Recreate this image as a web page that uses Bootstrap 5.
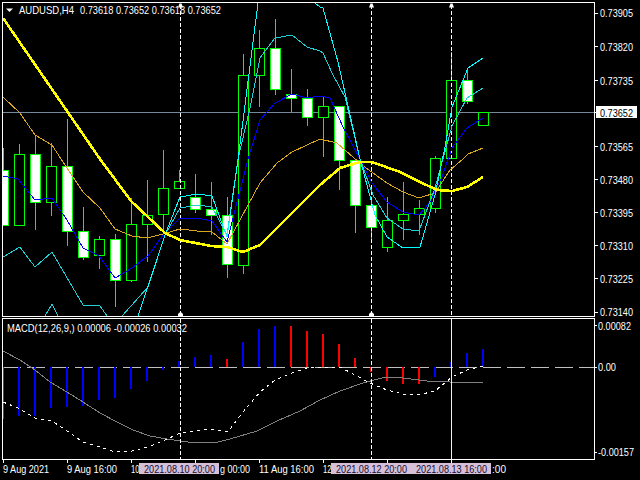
<!DOCTYPE html>
<html lang="en">
<head>
<meta charset="utf-8">
<title>AUDUSD,H4</title>
<link href="https://cdn.jsdelivr.net/npm/bootstrap@5.3.0/dist/css/bootstrap.min.css" rel="stylesheet">
<style>
html,body{margin:0;background:#000;overflow:hidden}
.mt-frame{width:640px;height:480px;padding-top:2px;background:#000}
.pane-main,.pane-sub{margin-left:2px;border:1px solid #fff;width:593px}
.pane-main{height:315px}
.pane-sub{height:142px;margin-top:1px}
.pane-main svg,.pane-sub svg,.axis-y,.axis-x{display:block}
.axis-y{width:45px;overflow:visible;flex-shrink:0}
.axis-x{flex-shrink:0}
svg text{font-family:"Liberation Sans",Arial,sans-serif;font-size:11px;fill:#fff}
svg text.dark{fill:#101030}
svg text.ink{fill:#000}
.th{fill:none;stroke-width:1;shape-rendering:crispEdges}
.c1{stroke:#00ffff}
.c2{stroke:#20d0d8}
.or{stroke:#daa520}
.bl{stroke:#0000ff}
.ye{fill:none;stroke:#ffff00;stroke-width:2.6;stroke-linejoin:round;shape-rendering:crispEdges}
.wick{stroke:#00ff00;stroke-width:1;fill:none;shape-rendering:crispEdges}
.bw{fill:#fff;stroke:#00ff00;shape-rendering:crispEdges}
.bh{fill:#000;stroke:#00ff00;shape-rendering:crispEdges}
.dash{stroke:#fff;stroke-dasharray:4 2;fill:none;shape-rendering:crispEdges}
.hbl{stroke:#0000ff;stroke-width:2;fill:none;shape-rendering:crispEdges}
.hrd{stroke:#ff0000;stroke-width:2;fill:none;shape-rendering:crispEdges}
</style>
</head>
<body>
<div class="mt-frame d-flex flex-column">
  <div class="d-flex">
    <div class="pane-main flex-shrink-0">
      <svg width="591" height="313" viewBox="3 3 591 313" aria-label="Price chart">
        <path class="th" stroke="#778899" d="M3 112.5H594"/>
        <path class="wick" d="M3.5 148V170M19.5 144V154M35.5 135V154M35.5 202V230M51.5 143V166M51.5 202V216M67.5 119V166M67.5 231V246M83.5 207V231M83.5 257V260M99.5 236V239M99.5 255V269M115.5 234V239M115.5 280V307M131.5 198V224M131.5 280V282M147.5 180V215M147.5 224V262M163.5 150V188M163.5 214V233M179.5 170V181M195.5 174V197M195.5 209V213M211.5 182V209M211.5 215V235M227.5 197V215M227.5 264V278M243.5 54V75M243.5 265V274M259.5 30V48M259.5 75V107M275.5 19V48M275.5 89V95M291.5 69V94M291.5 98V112M307.5 89V98M307.5 117V126M323.5 97V106M323.5 117V157M339.5 160V190M355.5 205V233M371.5 227V243M387.5 197V220M387.5 247V252M403.5 182V214M403.5 220V240M419.5 200V208M419.5 214V235M435.5 156V158M435.5 208V213M451.5 52V80M467.5 68V80M467.5 101V104"/>
        <path class="bw" d="M-1.500 170.500h10v55h-10zM30.500 154.500h10v48h-10zM62.500 166.500h10v65h-10zM78.500 231.500h10v26h-10zM110.500 239.500h10v41h-10zM190.500 197.500h10v12h-10zM206.500 209.500h10v6h-10zM222.500 215.500h10v49h-10zM270.500 48.500h10v41h-10zM286.500 94.500h10v4h-10zM302.500 98.500h10v19h-10zM334.500 106.500h10v54h-10zM350.500 160.500h10v45h-10zM366.500 205.500h10v22h-10zM462.500 80.500h10v21h-10z"/>
        <path class="bh" d="M14.500 154.500h10v71h-10zM46.500 166.500h10v36h-10zM94.500 239.500h10v16h-10zM126.500 224.500h10v56h-10zM142.500 215.500h10v9h-10zM158.500 188.500h10v26h-10zM174.500 181.500h10v7h-10zM238.500 75.500h10v190h-10zM254.500 48.500h10v27h-10zM318.500 106.500h10v11h-10zM382.500 220.500h10v27h-10zM398.500 214.500h10v6h-10zM414.500 208.500h10v6h-10zM430.500 158.500h10v50h-10zM446.500 80.500h10v78h-10zM478.500 112.500h10v13h-10z"/>
        <path class="dash" d="M180.500 5V316M371.500 5V316M451.500 5V316"/>
        <polyline class="th or" points="3,97 20,113 35,135 52,145 63,162 83,192 100,208 115,229 132,236 147,238 163,234 180,229 197,231 212,232 227,244 233,233 248,205 260,183 277,163 292,152 320,139 337,143 362,165 387,183 403,192 419,198 435,193 450,170 463,159 468,154 483,148"/>
        <polyline class="th bl" points="3,176 18,179 35,200 52,198 67,220 83,248 99,256 115,278 132,268 148,256 163,235 180,218 197,218 212,221 227,242 248,159 260,120 275,103 292,94 307,98 320,96 330,98 343,127 360,159 372,183 387,202 403,212 419,215 430,202 442,177 452,148 467,128 483,118"/>
        <polyline class="th c2" points="3,257 20,247 35,267 52,252 83,305 100,306 107,316"/>
        <polyline class="th c2" points="45,316 52,304 58,316"/>
        <polyline class="th c2" points="122,316 148,287 165,235 180,208 197,205 212,207 227,235 238,159 250,108 260,58 275,38 292,35 307,47 320,51 323,53 333,75 345,97 360,159 373,195 387,218 403,229 419,231 435,188 452,126 467,98 483,88"/>
        <polyline class="th c1" points="138,316 165,235 180,197 197,194 212,196 227,237 238,160 258,3"/>
        <polyline class="th c1" points="315,3 320,7 323,8 338,62 360,159 375,215 387,237 403,248 420,247 435,195 445,147 452,107 468,68 483,58"/>
        <polyline class="ye" points="3,18 100,159 131,201 165,233 180,240 211,246 227,247 243,252 260,245 287,218 320,185 340,168 360,162 372,162 400,172 420,182 437,190 452,191 467,187 483,177"/>
        <path fill="#fff" d="M178 7.500l1.500-4h2l1.500 4zM369 7.500l1.500-4h2l1.500 4zM449 7.500l1.500-4h2l1.500 4zM178 316v-2l1.500-1.500h2l1.500 1.500v2zM369 316v-2l1.500-1.500h2l1.500 1.500v2z"/>
        <path fill="#fff" d="M6 8.500h7l-3.500 3.500z"/>
        <text x="19" y="14" textLength="55" lengthAdjust="spacingAndGlyphs">AUDUSD,H4</text>
        <text x="80" y="14" textLength="141" lengthAdjust="spacingAndGlyphs">0.73618 0.73652 0.73618 0.73652</text>
      </svg>
    </div>
    <svg class="axis-y" height="315" viewBox="595 2 45 315" aria-label="Price axis">
      <path stroke="#fff" shape-rendering="crispEdges" d="M595 13.500h3M595 46.500h3M595 80.500h3M595 112.500h1M595 146.500h3M595 179.500h3M595 212.500h3M595 245.500h3M595 278.500h3M595 312.500h3"/>
      <rect x="596" y="106" width="41" height="12" fill="#fff"/>
      <text x="600" y="17" textLength="33" lengthAdjust="spacingAndGlyphs">0.73905</text>
      <text x="600" y="50.500" textLength="33" lengthAdjust="spacingAndGlyphs">0.73820</text>
      <text x="600" y="84.500" textLength="33" lengthAdjust="spacingAndGlyphs">0.73735</text>
      <text class="ink" x="600" y="116.500" textLength="33" lengthAdjust="spacingAndGlyphs">0.73652</text>
      <text x="600" y="150.500" textLength="33" lengthAdjust="spacingAndGlyphs">0.73565</text>
      <text x="600" y="183.500" textLength="33" lengthAdjust="spacingAndGlyphs">0.73480</text>
      <text x="600" y="216.500" textLength="33" lengthAdjust="spacingAndGlyphs">0.73395</text>
      <text x="600" y="249.500" textLength="33" lengthAdjust="spacingAndGlyphs">0.73310</text>
      <text x="600" y="282.500" textLength="33" lengthAdjust="spacingAndGlyphs">0.73225</text>
      <text x="600" y="316" textLength="33" lengthAdjust="spacingAndGlyphs">0.73140</text>
    </svg>
  </div>
  <div class="d-flex">
    <div class="pane-sub flex-shrink-0">
      <svg width="591" height="140" viewBox="3 319 591 140" aria-label="MACD chart">
        <path fill="none" stroke="#c0c0c0" stroke-dasharray="18 6" shape-rendering="crispEdges" d="M3 367.500H594"/>
        <path class="hbl" d="M19 367V416M35 367V416M51 367V408M67 367V407M83 367V406M99 367V400M115 367V398M131 367V389M147 367V381M163 367V370M179 367V361M195 367V357M211 367V355M243 367V342M259 367V329M275 367V326M435 367V377M451 367V362M467 367V353M483 367V349"/>
        <path class="hrd" d="M3 367V419M227 367V359M291 367V326M307 367V331M323 367V334M339 367V344M355 367V358M371 367V372M387 367V381M403 367V384M419 367V384"/>
        <polyline class="th" stroke="#808080" points="3,351 20,360 35,370 50,382 67,392 83,402 100,413 117,422 133,430 150,436 167,439 188,442 218,442 230,439 257,431 277,421 300,411 320,400 340,391 363,383 382,378 393,377 403,378 427,381 450,382 483,382"/>
        <polyline class="th" stroke="#fff" stroke-dasharray="3 4" points="3,402 18,408 35,418 52,421 67,431 83,442 100,447 115,452 132,451 148,447 165,440 180,433 197,431 212,429 228,432 243,412 260,392 275,380 292,373 308,368 320,367 332,367 340,367 353,374 370,383 387,390 403,394 418,395 435,391 452,377 467,370 483,366"/>
        <path class="dash" d="M180.500 319V459M371.500 319V459"/>
        <path class="th" stroke="#ffff90" d="M451.500 319V459"/>
        <text x="7" y="332" textLength="180" lengthAdjust="spacingAndGlyphs">MACD(12,26,9,) 0.00006 -0.00026 0.00032</text>
      </svg>
    </div>
    <svg class="axis-y" height="143" viewBox="595 317 45 143" aria-label="MACD axis">
      <path stroke="#fff" shape-rendering="crispEdges" d="M595 325.500h2M595 367.500h2M595 452.500h2"/>
      <text x="598" y="329.500" textLength="33" lengthAdjust="spacingAndGlyphs">0.00082</text>
      <text x="598" y="371" textLength="18" lengthAdjust="spacingAndGlyphs">0.00</text>
      <text x="598" y="456" textLength="36" lengthAdjust="spacingAndGlyphs">-0.00157</text>
    </svg>
  </div>
  <svg class="axis-x" width="640" height="20" viewBox="0 460 640 20" aria-label="Time axis">
    <path stroke="#fff" shape-rendering="crispEdges" d="M3.500 460v3M67.500 460v3M131.500 460v3M195.500 460v3M259.500 460v3M323.500 460v3M387.500 460v3M451.500 460v3"/>
    <text x="3" y="473" textLength="46" lengthAdjust="spacingAndGlyphs">9 Aug 2021</text>
    <text x="67" y="473" textLength="50" lengthAdjust="spacingAndGlyphs">9 Aug 16:00</text>
    <text x="131" y="473" textLength="8.500" lengthAdjust="spacingAndGlyphs">10</text>
    <text x="220" y="473" textLength="30" lengthAdjust="spacingAndGlyphs">g 00:00</text>
    <text x="259" y="473" textLength="55" lengthAdjust="spacingAndGlyphs">11 Aug 16:00</text>
    <text x="323" y="473" textLength="8.500" lengthAdjust="spacingAndGlyphs">12</text>
    <text x="492" y="473" textLength="14" lengthAdjust="spacingAndGlyphs">:00</text>
    <rect x="139" y="463" width="80" height="11" fill="#d8bfd8"/>
    <rect x="331" y="463" width="160" height="11" fill="#d8bfd8"/>
    <text class="dark" x="144" y="473" textLength="71" lengthAdjust="spacingAndGlyphs">2021.08.10 20:00</text>
    <text class="dark" x="336" y="473" textLength="71" lengthAdjust="spacingAndGlyphs">2021.08.12 20:00</text>
    <text class="dark" x="416" y="473" textLength="71" lengthAdjust="spacingAndGlyphs">2021.08.13 16:00</text>
  </svg>
</div>
<script src="https://cdn.jsdelivr.net/npm/bootstrap@5.3.0/dist/js/bootstrap.bundle.min.js"></script>
</body>
</html>
